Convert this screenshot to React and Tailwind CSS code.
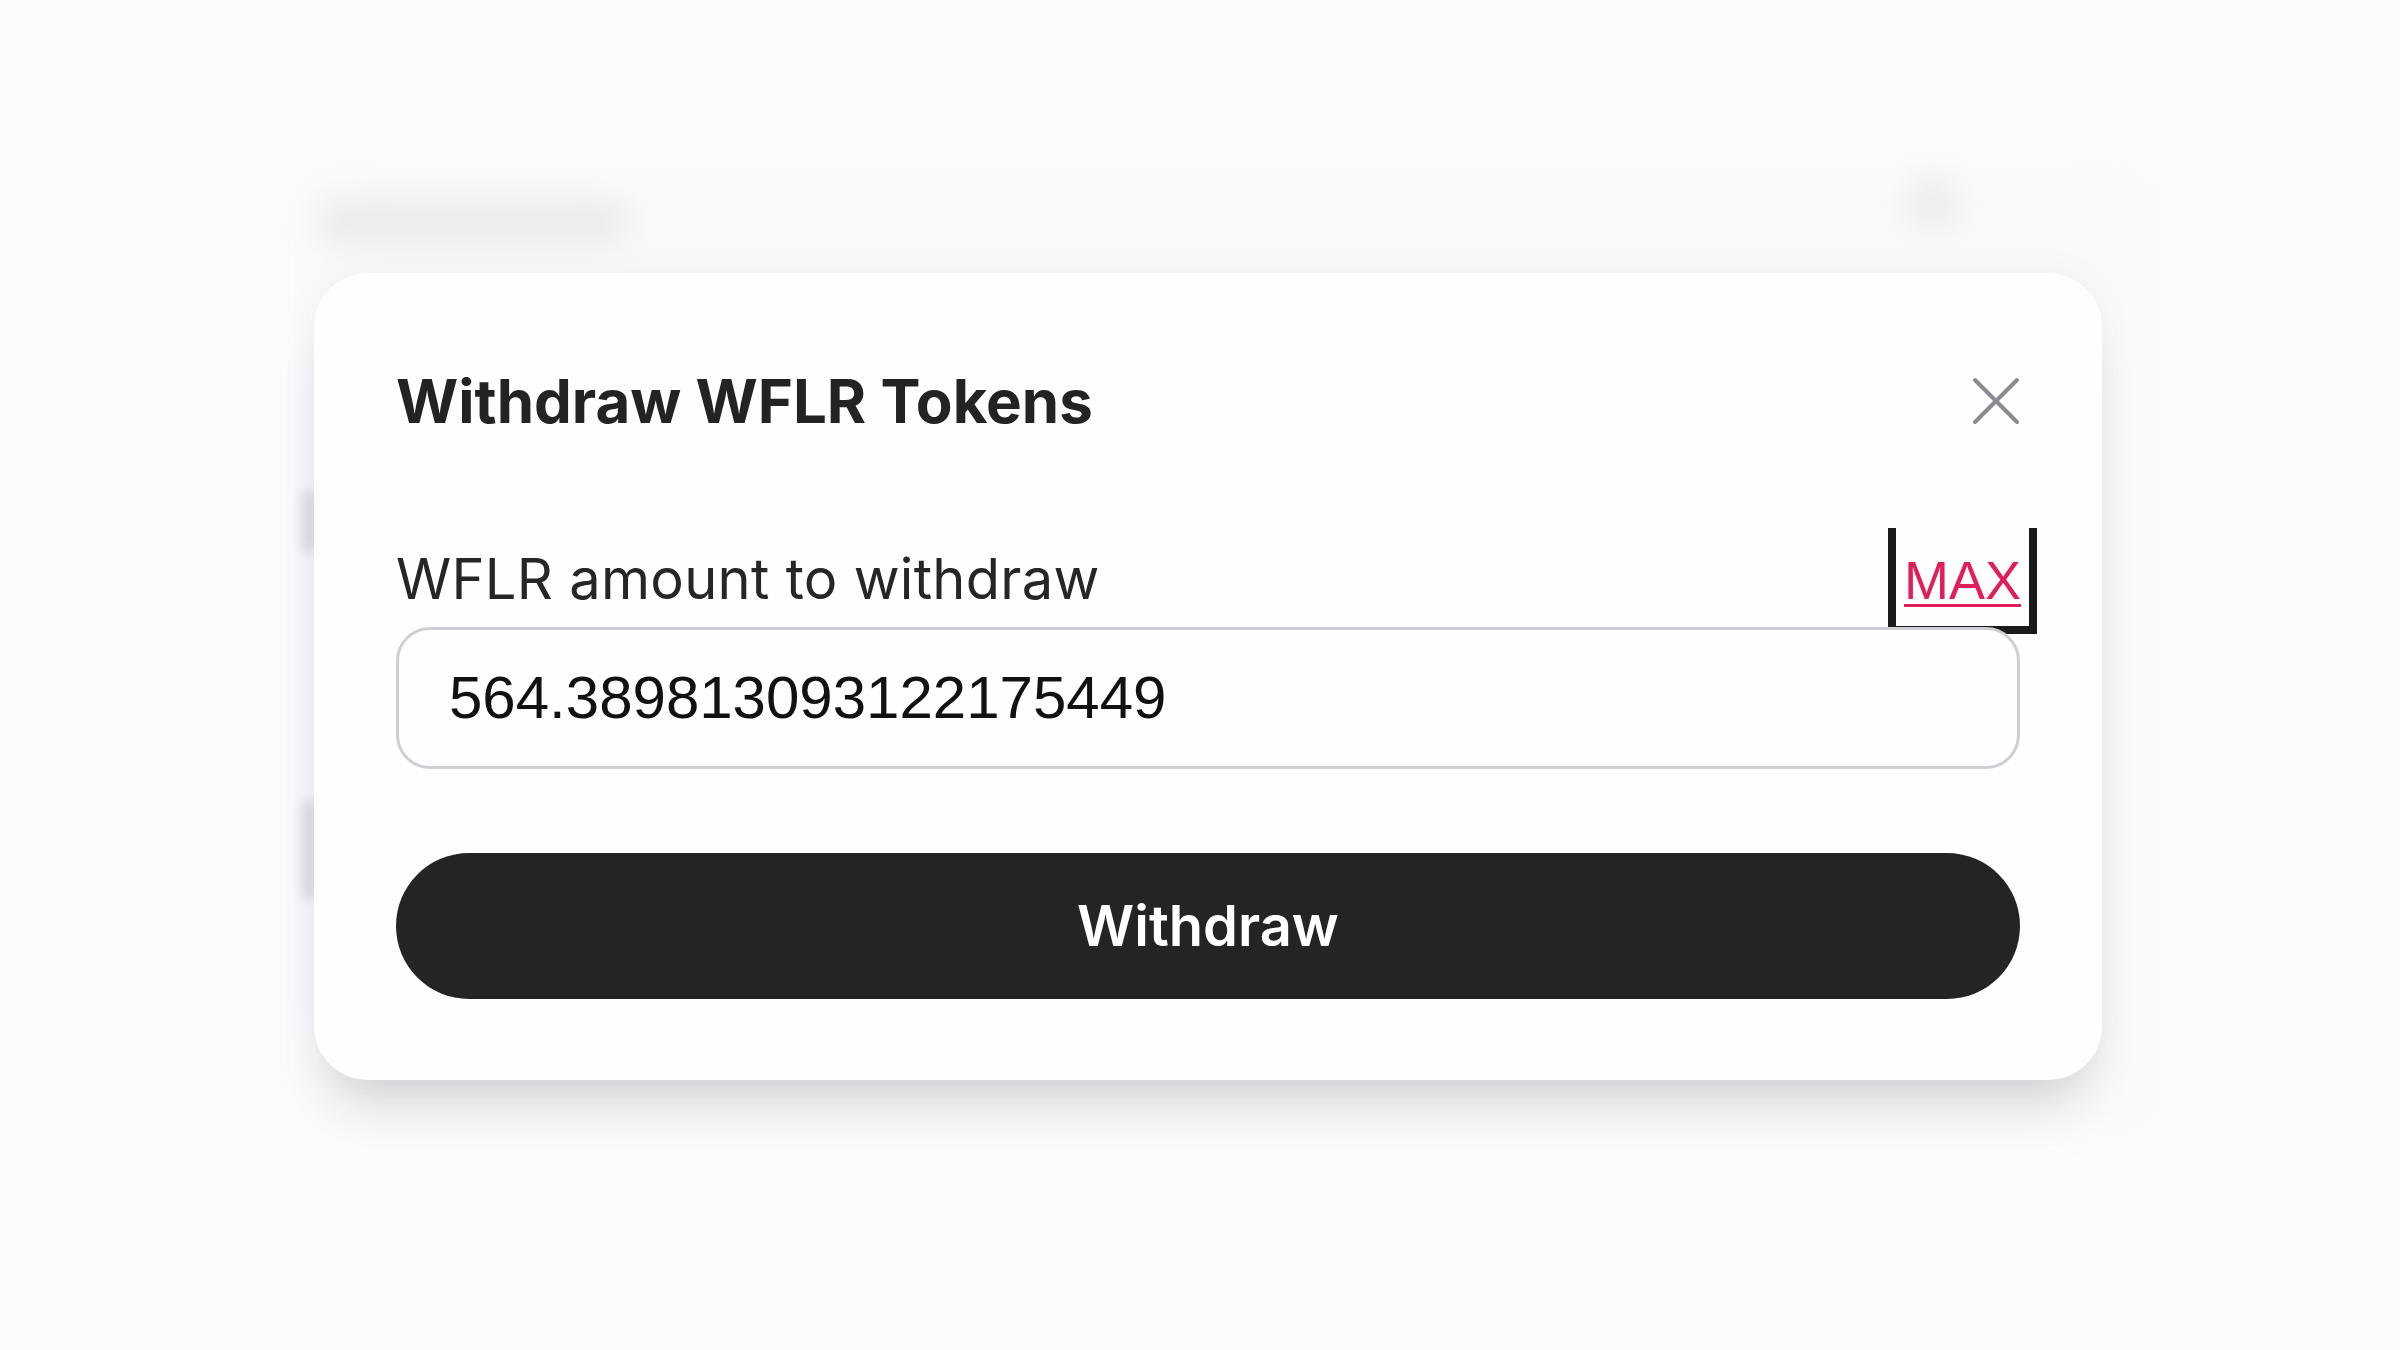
import React from "react";

export default function App() {
  return (
    <div className="relative min-h-screen w-full overflow-hidden bg-[#fcfbfd] font-['Inter',sans-serif]">
      {/* blurred page lying behind the dialog */}
      <div className="pointer-events-none absolute inset-0">
        <div className="absolute left-[296px] top-[170px] h-[960px] w-[1860px] rounded-[48px] bg-[#f9f8fa] blur-[20px]" />
        <div className="absolute left-[318px] top-[200px] h-[44px] w-[310px] rounded-full bg-[#ebeaed] blur-[14px]" />
        <div className="absolute left-[1905px] top-[175px] h-[56px] w-[56px] rounded-full bg-[#eeedf0] blur-[12px]" />
        <div className="absolute left-[302px] top-[490px] h-[64px] w-[14px] rounded-full bg-[#dcdbe0] blur-[6px]" />
        <div className="absolute left-[302px] top-[800px] h-[100px] w-[14px] rounded-full bg-[#dcdbe0] blur-[6px]" />
      </div>

      <div className="relative pl-[314px] pt-[273px]">
        <div className="w-[1788px] rounded-[54px] bg-[#fefefe] px-[82px] pb-[81px] pt-[97px] shadow-[0_40px_50px_-18px_rgba(40,30,50,0.16),0_0_40px_rgba(40,30,50,0.04)]">
          {/* header */}
          <div className="flex h-[62px] items-center justify-between">
            <h2 className="text-[60px] font-bold leading-none tracking-[0px] text-[#232225]">
              Withdraw WFLR Tokens
            </h2>
            <button className="flex h-[48px] w-[48px] items-center justify-center">
              <svg width="48" height="48" viewBox="0 0 48 48" fill="none">
                <path d="M3 3L45 45M45 3L3 45" stroke="#8b8a90" strokeWidth="4" strokeLinecap="round" />
              </svg>
            </button>
          </div>

          {/* label row */}
          <div className="mt-[96px] flex items-baseline justify-between">
            <label className="text-[56px] leading-none tracking-[0.3px] text-[#262528]">
              WFLR amount to withdraw
            </label>
            <div className="mr-[-17px] border-x-[8px] border-b-[8px] border-[#1a1a1c] px-[8px] pb-[19px] pt-[25px]">
              <span className="font-['Liberation_Sans',sans-serif] text-[54px] leading-none text-[#e01e5a] underline decoration-[3px] underline-offset-[5px]">
                MAX
              </span>
            </div>
          </div>

          {/* input */}
          <div className="relative z-10 -mt-[7px] flex h-[142px] items-center rounded-[34px] border-[3px] border-[#cfced3] bg-[#fefefe] pl-[50px]">
            <span className="font-['Liberation_Sans',sans-serif] text-[60px] leading-none text-[#111113]">
              564.389813093122175449
            </span>
          </div>

          {/* button */}
          <button className="mt-[84px] flex h-[146px] w-full items-center justify-center rounded-full bg-[#252326]">
            <span className="text-[56px] font-semibold leading-none text-white">Withdraw</span>
          </button>
        </div>
      </div>
    </div>
  );
}
